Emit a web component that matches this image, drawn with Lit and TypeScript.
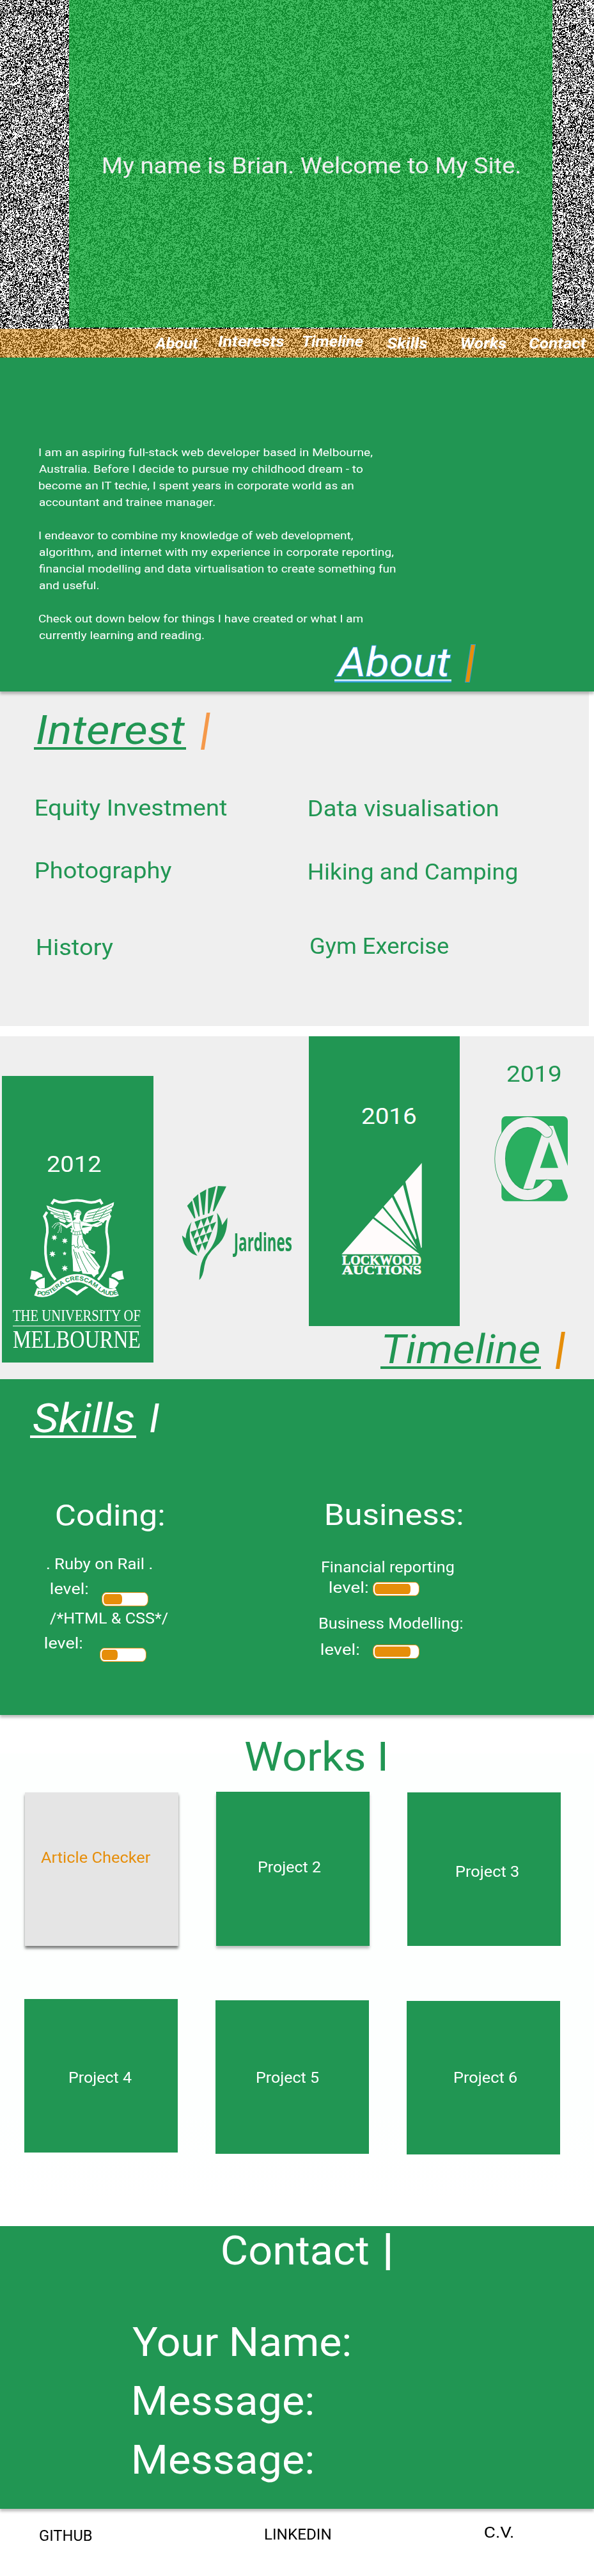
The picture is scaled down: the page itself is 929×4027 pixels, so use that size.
import { LitElement, html, css, svg } from "lit";
import { customElement, property } from "lit/decorators.js";

/** A single line of text stretched so that its ink starts at the left edge and spans `width` pixels. */
@customElement("fit-text")
class FitText extends LitElement {
  static styles = css`
    :host { display: block; white-space: pre; line-height: 1; flex: none; }
    .box { display: block; }
    .line { display: inline-block; transform-origin: 0 50%; }
  `;
  @property() text = "";
  @property({ type: Number }) width = 0;

  render() {
    return html`<span class="box" style="width:${this.width}px"><span class="line">${this.text}</span></span>`;
  }

  firstUpdated() {
    const line = this.renderRoot.querySelector(".line") as HTMLElement;
    const ctx = document.createElement("canvas").getContext("2d")!;
    ctx.font = getComputedStyle(line).font;
    const m = ctx.measureText(this.text);
    const ink = m.actualBoundingBoxLeft + m.actualBoundingBoxRight;
    const scale = this.text.length > 1 ? this.width / ink : 1;
    line.style.transform = `scaleX(${scale.toFixed(4)}) translateX(${m.actualBoundingBoxLeft.toFixed(2)}px)`;
  }
}

/** Black and white television static. */
@customElement("static-noise")
class StaticNoise extends LitElement {
  static styles = css`
    :host { display: block; }
    canvas { display: block; }
  `;

  render() {
    return html`<canvas width="929" height="559"></canvas>`;
  }

  firstUpdated() {
    const canvas = this.renderRoot.querySelector("canvas") as HTMLCanvasElement;
    const ctx = canvas.getContext("2d")!;
    const w = canvas.width;
    const h = canvas.height;
    let seed = 90210;
    const rand = () => {
      seed = (seed * 1664525 + 1013904223) >>> 0;
      return seed / 4294967296 - 0.5;
    };
    const field = new Float32Array((w + 1) * (h + 1));
    for (let i = 0; i < field.length; i++) field[i] = rand();
    const img = ctx.createImageData(w, h);
    for (let y = 0; y < h; y++) {
      for (let x = 0; x < w; x++) {
        const i = y * (w + 1) + x;
        const v = field[i] + 0.5 * field[i + 1] + 0.5 * field[i + w + 1];
        const c = v > -0.03 ? 255 : 0;
        const p = (y * w + x) * 4;
        img.data[p] = img.data[p + 1] = img.data[p + 2] = c;
        img.data[p + 3] = 255;
      }
    }
    ctx.putImageData(img, 0, 0);
  }
}

/** A small gauge showing how far a skill has come. */
@customElement("level-bar")
class LevelBar extends LitElement {
  static styles = css`
    :host { display: block; }
    .track {
      box-sizing: border-box; width: 73px; height: 22px; padding: 2px;
      border: 1px solid #e68e0a; border-radius: 7px / 9px; background: #fff;
    }
    .fill { height: 16px; border-radius: 4px / 6px; background: #e68e0a; }
  `;
  @property({ type: Number }) value = 0;

  render() {
    return html`<div class="track"><div class="fill" style="width:${this.value}px"></div></div>`;
  }
}

const t = (text: string, width: number, cls = "") =>
  html`<fit-text class=${cls} text=${text} width=${width}></fit-text>`;

const star = (cx: number, cy: number, r: number, n: number) => {
  const pts: string[] = [];
  for (let i = 0; i < n * 2; i++) {
    const a = (Math.PI * i) / n - Math.PI / 2;
    const q = i % 2 ? r * 0.48 : r;
    pts.push(`${(cx + q * Math.cos(a)).toFixed(1)},${(cy + q * Math.sin(a)).toFixed(1)}`);
  }
  return svg`<polygon points=${pts.join(" ")} />`;
};

const ribbonEnd = svg`
  <path d="M42,438 Q72,440 92,456 L95,466 Q82,467 60,483 L35,477 Q42,458 42,438Z" />
  <path d="M60,496 Q75,478 105,471 L105,520 L82,523 Q70,514 60,496Z" />`;

const crest = html`<svg class="crest" viewBox="30 98 450 465" width="150" height="155">
  <g fill="none" stroke="#fff" stroke-width="12">
    <path d="M137,126 L149,108 Q178,123 207,116 Q256,101 305,116 Q334,123 364,108 L375,126" />
    <path d="M116,163 L103,183 Q119,215 117,258 Q102,330 112,386 Q120,442 156,481" />
    <path d="M397,163 L410,183 Q393,215 395,258 Q410,330 400,386 Q392,442 355,481" />
  </g>
  <g fill="#fff">
    <path d="M200,517 L213,511 L256,536 L296,511 L310,517 Q280,532 256,555 Q232,532 200,517Z" />
    ${star(150, 283, 15, 7)}${star(199, 298, 15, 7)}${star(141, 360, 16, 7)}${star(198, 358, 10, 5)}${star(199, 427, 16, 7)}
    <path d="M113,132 Q165,154 205,155 Q226,158 231,180 L236,208 L220,212 L206,205 L200,214 L176,206 L170,194 L150,189 L146,176 L131,170 L133,160 L119,150Z" />
    <path d="M430,117 Q375,145 325,152 Q298,158 291,180 L283,207 L300,212 L340,208 L355,203 L368,210 L380,215 L388,203 L402,200 L399,192 L412,181 L410,170 L420,158 L418,147 L428,132Z" />
    <path d="M242,180 Q238,156 258,153 Q277,153 277,170 L270,181 L269,195 L277,208 L283,225 L276,250 L281,268 Q282,300 308,320 L312,334 L343,349 L338,361 L315,352 Q342,385 365,420 L356,436 L358,452 L346,458 L336,470 L325,456 L282,452 L278,438 L264,444 L238,441 L236,385 L232,360 L231,320 L233,268 L241,250 L231,232 L236,205 L250,196 L249,189 L240,189Z" />
    <path d="M277,238 L324,230 L327,236 L320,250 L312,252 L309,262 L300,262 L297,270 L284,262Z" />
    <path d="M325,222 L350,223 L375,214 L372,224 L362,228 L352,234 L338,232Z" />
    <path d="M238,205 L208,226 L180,213 L172,212 L176,219 L208,240 L238,222Z" />
    <path d="M278,206 L325,222 L366,208 L370,213 L330,232 L276,226Z" />
    <path d="M238,238 L222,238 L230,246 L226,256 L236,262Z" />
    ${ribbonEnd}
    <g transform="translate(512 0) scale(-1 1)">${ribbonEnd}</g>
  </g>
  <g fill="none" stroke="#fff" stroke-width="3.5" stroke-dasharray="5 2.5">
    <path d="M174,213 Q150,214 139,236" /><path d="M170,219 Q156,224 149,242" />
    <path d="M176,218 Q186,236 180,262" /><path d="M173,228 Q180,244 166,260" />
  </g>
  <g fill="none" stroke="#219653" stroke-width="3">
    <path d="M124,143 Q165,167 214,170 M128,157 Q165,178 220,184 M145,172 Q185,186 226,197 M165,188 Q190,196 212,203 M190,160 L205,205" />
    <path d="M420,130 Q370,162 306,170 M422,144 Q380,170 302,184 M418,160 Q370,184 296,197 M406,176 Q375,194 330,202 M372,140 Q344,160 330,196 M395,150 L360,200" />
    <path d="M244,163 L276,168 M246,181 Q255,178 252,168 M262,156 L276,160 M240,209 Q240,232 246,244 M270,206 Q268,224 274,244" stroke-width="2.2" />
    <path d="M235,253 Q258,260 279,250 M234,268 Q256,276 280,266 M247,256 L246,272 M258,257 L258,272 M268,256 L270,270" stroke-width="2.2" />
    <path d="M231,322 L242,318 L248,330 L258,324 L262,334 L272,322 L280,330 L288,322 M262,275 Q255,300 262,324 M280,290 Q282,315 298,336 L332,350" />
    <path d="M240,338 Q250,380 274,436 M262,352 Q280,400 306,446 M284,346 Q308,400 342,434 M300,352 Q330,392 352,418 M250,350 L262,382" />
    <path d="M244,214 L270,216" stroke-width="1.8" />
  </g>
  <path d="M62,537 Q112,556 156,516 Q208,473 256,473 Q304,473 356,516 Q400,556 445,537" fill="none" stroke="#fff" stroke-width="38" />
  <path id="mottoline" d="M68,551 Q120,565 162,524 Q212,483 256,483 Q300,483 350,524 Q392,565 444,549" fill="none" />
  <text fill="#219653" font-family="'Liberation Sans', sans-serif" font-weight="700" font-size="28" textLength="420" lengthAdjust="spacingAndGlyphs"><textPath href="#mottoline">POSTERA CRESCAM LAUDE</textPath></text>
</svg>`;

const uniName = html`<svg class="uni" viewBox="0 0 200 66" width="200" height="66">
  <g fill="#fff" font-family="'Liberation Serif', serif">
    <text x="0" y="18.5" font-size="25.5" textLength="200" lengthAdjust="spacingAndGlyphs">THE UNIVERSITY OF</text>
    <text x="0" y="61" font-size="40" textLength="200" lengthAdjust="spacingAndGlyphs">MELBOURNE</text>
  </g>
  <rect y="26" width="200" height="1.8" fill="#a6d5ba" />
</svg>`;

const jardines = html`<svg class="jardines" viewBox="27 96 522 450" width="174" height="150" fill="#219653">
  <path d="M53,195 L76,170 L92,252 L87,255Z M80,163 L105,140 L112,243 L107,247Z M113,135 L143,118 L134,237 L127,238Z M152,114 L188,103 L157,230 L150,231Z M197,102 L237,104 L180,220 L173,221Z" />
  <path d="M74,270 C58,320 62,375 101,429 C60,420 35,380 29,334 L46,348 Q48,305 74,270Z" />
  <path d="M193,228 Q212,250 217,286 L242,250 C242,320 222,358 188,386 Q142,424 134,478 Q128,528 110,543 C112,480 122,440 150,412 C195,360 203,300 193,228Z" />
  <path d="M88,270 L118,259 L101,305Z M118,259 L148,248 L131,292Z M148,248 L177,237 L160,280Z
    M69,317 L100,306 L82,350Z M100,306 L130,294 L111,338Z M130,294 L160,282 L141,326Z M160,282 L189,270 L170,314Z
    M82,350 L111,338 L95,382Z M111,338 L141,327 L124,370Z M141,327 L170,316 L153,360Z
    M93,382 L123,371 L107,416Z M123,371 L153,360 L137,404Z" />
  <text x="272" y="409" font-family="'Open Sans', sans-serif" font-weight="700" font-size="118" textLength="274" lengthAdjust="spacingAndGlyphs">Jardines</text>
</svg>`;

const lockwood = html`<svg class="lockwood" viewBox="0 0 128 178" width="128" height="178" fill="#fffbfb">
  <path d="M126.7,1 L101,30.2 L125.5,134 L126.7,133Z M97.3,35.3 L82.7,51.3 L117,120.8 L118.6,118.5Z M80,54.5 L67,69 L118.5,132.3Z M65.3,71.3 L52.3,85.8 L119.5,137.6Z M50.3,88 L1.3,143.8 L123.3,143.8Z" />
  <g font-family="'Liberation Serif', serif" font-weight="700" stroke="#fffbfb" stroke-width=".7">
    <text x="2" y="160" font-size="20" textLength="124" lengthAdjust="spacingAndGlyphs">LOCKWOOD</text>
    <text x="2" y="175" font-size="19" textLength="124" lengthAdjust="spacingAndGlyphs">AUCTIONS</text>
  </g>
</svg>`;

const caLogo = html`<svg class="ca" viewBox="0 0 114 133" width="114" height="133">
  <rect x="9.3" y="0" width="103.7" height="132.7" rx="7" fill="#2aaf60" />
  <path d="M84.3,15 L90.3,15 L114,80.5 L114,127 L104,99 L63.3,99 L58.7,113.5 L43.3,113.5 L73.3,25.8Z M83.7,40 L69.7,80.7 L98,80.7Z" fill="#efefef" fill-rule="evenodd" />
  <path d="M80.6,24.9 A43.5,57 0 1 0 80.6,107.5" fill="none" stroke="#219653" stroke-width="17.4" stroke-linecap="round" />
  <path d="M80.6,24.9 A43.5,57 0 1 0 80.6,107.5" fill="none" stroke="#efefef" stroke-width="15.8" stroke-linecap="round" />
</svg>`;

@customElement("app-root")
class AppRoot extends LitElement {
  static styles = css`
    :host { display: block; width: 929px; height: 4027px; overflow: hidden; background: #fff;
      font-family: Roboto, "Liberation Sans", sans-serif; color: #fff; }
    section, header, footer { box-sizing: border-box; }
    .row { display: flex; align-items: flex-start; }
    svg { display: block; overflow: visible; }

    .top { display: grid; height: 559px; }
    .top > * { grid-area: 1 / 1; }
    .hero { height: 512px; margin: 0 65px 2px 108px; padding: 242px 0 0 53px; box-sizing: border-box;
      background: rgba(19, 172, 59, .8); font-size: 35px; color: #efefef; }
    nav { display: grid; grid-template-columns: 100px 132px 132px 116px 106px 1fr; box-sizing: border-box;
      height: 45px; padding: 12px 0 0 241px; background: rgba(230, 142, 10, .52);
      font: italic 700 23px Roboto, sans-serif; }
    .raised { margin-top: -3px; }

    .green { background: #219653; box-shadow: 0 4px 4px rgba(0, 0, 0, .25); position: relative; }
    .title { font-size: 63px; font-style: italic; height: 63px; }
    .title .word { border-bottom: 4px solid currentColor; height: 58px; padding-left: 5px; margin-left: -5px; }
    .bar { font-size: 68px; font-weight: 900; color: #e68e0a; margin-top: -4px; }

    .about { height: 522px; padding: 135px 0 0 60.5px; }
    .copy { display: flex; flex-direction: column; font-size: 17.3px; }
    .copy fit-text { line-height: 26px; }
    .gap { margin-top: 26px; }
    .about .title { margin: -2px 0 0 465.5px; -webkit-text-stroke: 2px #2d9cdb; paint-order: stroke fill; }
    .about .word { width: 180px; padding-left: 3px; margin-left: -3px; border-bottom: 3px solid #c4e6fa; box-shadow: 0 2px 0 #2d9cdb; }
    .about .bar { margin-left: 22px; }

    .interest { width: 921px; height: 523px; padding: 29px 0 0 58px; background: #efefef; color: #219653; margin-bottom: 16px; }
    .interest .word { width: 233px; }
    .interest .bar { margin-left: 23px; font-weight: 700; color: #f5994a; }
    .likes { display: grid; grid-template-columns: 427px auto; margin-left: -2px; font-size: 34.6px; padding-top: 73px; }
    .likes fit-text { height: 97px; }
    .likes .low { margin-top: 2px; height: 95px; }
    .likes .h { margin: 23px 0 0 2px; }
    .likes .g { margin: 21px 0 0 3px; }
    .likes .one { margin-top: 1px; }

    .timeline { height: 536px; background: #efefef; display: flex; align-items: flex-start; color: #219653; }
    .year { font-size: 35px; }
    .card1 { width: 237px; height: 448px; margin: 62px 0 0 3px; background: #219653; color: #fff; }
    .card1 .year { margin: 121px 0 0 71px; }
    .crest { margin: 35px 0 0 42px; }
    .uni { margin: 18px 0 0 17px; }
    .jardines { margin: 232px 0 0 44px; }
    .late { width: 446px; margin-left: 25px; }
    .card2 { width: 236px; height: 453px; background: #219653; color: #fff; }
    .card2 .year { margin: 108px 0 0 83px; }
    .lockwood { margin: 54px 0 0 50px; }
    .col4 .year { margin: 42px 0 0 74px; }
    .ca { margin: 48px 0 0 56px; }
    .late .title { margin: 5px 0 0 118px; }
    .late .word { width: 245px; padding-left: 6px; margin-left: -6px; }
    .late .bar { margin-left: 23px; }

    .skills { height: 525px; padding: 30px 0 0 52px; }
    .skills .word { width: 161px; }
    .skills .title > .i { margin-left: 22px; }
    .groups { display: grid; grid-template-columns: 447px 1fr; padding-top: 96px; font-size: 23.5px; }
    .h2 { font-size: 47px; }
    .coding .h2 { margin-left: 36px; }
    .ruby { margin: 42px 0 0 21px; }
    .l1 { margin: 15px 0 0 27px; }
    .l1 level-bar { margin: 16px 0 0 21px; }
    .htmlcss { margin: 24px 0 0 26px; }
    .l2 { margin: 15px 0 0 18px; }
    .l2 level-bar { margin: 18px 0 0 27px; }
    .l1, .l2 { height: 22.5px; }
    .business .h2 { margin: -1px 0 0 11px; }
    .fin { margin: 48px 0 0 4px; }
    .l3 { margin: 8px 0 0 16px; height: 25px; }
    .l3 level-bar { margin: 2px 0 0 7px; }
    .mod { margin: 31px 0 0 0; }
    .l4 { margin: 18px 0 0 3px; }
    .l4 level-bar { margin: 3px 0 0 21px; }

    .works { height: 799px; padding-top: 35px; color: #219653; background: linear-gradient(#fff 60px, #fdfffe 61px, #fdfffe 620px, #fff 760px); }
    .works .h1 { font-size: 62.5px; margin-left: 383px; height: 86px; }
    .grid { display: grid; grid-template-columns: 240px 240px 240px; column-gap: 59px; margin-left: 39px; font-size: 23.3px; color: #fff; }
    .second { margin: 83px 0 0 38px; }
    .p { box-sizing: border-box; height: 240px; background: #219653; }
    .p1 { background: #e5e5e5; color: #e68e0a; box-shadow: 0 4px 4px rgba(0, 0, 0, .5); padding: 91px 0 0 25px; }
    .p2 { margin-top: -1px; height: 241px; box-shadow: 0 4px 4px rgba(0, 0, 0, .25); padding: 107px 0 0 66px; }
    .p3 { padding: 113px 0 0 76px; }
    .p4 { padding: 112px 0 0 70px; }
    .p5 { margin-top: 2px; padding: 110px 0 0 64px; }
    .p6 { margin-top: 3px; padding: 109px 0 0 74px; }

    .contact { height: 442px; padding: 7px 0 0 207px; font-size: 63px; }
    .contact .row { margin-left: 141px; margin-bottom: 80px; height: 63px; }
    .contact .pipe { margin: -4px 0 0 27px; font-size: 68px; font-weight: 900; }
    .contact > fit-text { height: 92px; }
    .msg { margin-left: 3px; }

    footer { display: grid; grid-template-columns: 352px 344px 1fr; padding: 27px 0 0 62px; font-size: 23.4px; color: #000; }
    .f1 { margin-top: 4px; }
    .f2 { margin-top: 2px; }
    .f3 { margin-top: -1px; }
  `;

  render() {
    return html`
      <header class="top">
        <static-noise></static-noise>
        <div>
          <div class="hero">${t("My name is Brian. Welcome to My Site.", 652)}</div>
          <nav>
            ${t("About", 69)}${t("Interests", 103, "raised")}${t("Timeline", 95, "raised")}
            ${t("Skills", 63)}${t("Works", 71)}${t("Contact", 90)}
          </nav>
        </div>
      </header>

      <section class="green about">
        <div class="copy">
          ${t("I am an aspiring full-stack web developer based in Melbourne,", 521.5)}
          ${t("Australia. Before I decide to pursue my childhood dream - to", 507)}
          ${t("become an IT techie, I spent years in corporate world as an", 492.5)}
          ${t("accountant and trainee manager.", 275.5)}
          ${t("I endeavor to combine my knowledge of web development,", 491, "gap")}
          ${t("algorithm, and internet with my experience in corporate reporting,", 554.5)}
          ${t("financial modelling and data virtualisation to create something fun", 558)}
          ${t("and useful.", 94)}
          ${t("Check out down below for things I have created or what I am", 506, "gap")}
          ${t("currently learning and reading.", 258.5)}
        </div>
        <div class="row title"><div class="word">${t("About", 179)}</div>${t("|", 14, "bar")}</div>
      </section>

      <section class="interest">
        <div class="row title"><div class="word">${t("Interest", 232)}</div>${t("|", 14, "bar")}</div>
        <div class="likes">
          ${t("Equity Investment", 299)}${t("Data visualisation", 295.5, "one")}
          ${t("Photography", 212)}${t("Hiking and Camping", 326, "low")}
          ${t("History", 118.5, "h")}${t("Gym Exercise", 216, "g")}
        </div>
      </section>

      <section class="timeline">
        <div class="card1">
          <div class="row">${t("2012", 84, "year")}</div>
          ${crest}${uniName}
        </div>
        ${jardines}
        <div class="late">
          <div class="row">
            <div class="card2"><div class="row">${t("2016", 84, "year")}</div>${lockwood}</div>
            <div class="col4"><div class="row">${t("2019", 84, "year")}</div>${caLogo}</div>
          </div>
          <div class="row title"><div class="word">${t("Timeline", 243)}</div>${t("|", 14, "bar")}</div>
        </div>
      </section>

      <section class="green skills">
        <div class="row title"><div class="word">${t("Skills", 158)}</div>${t("I", 14, "i")}</div>
        <div class="groups">
          <div class="coding">
            ${t("Coding:", 168, "h2")}
            ${t(". Ruby on Rail .", 165, "ruby")}
            <div class="row l1">${t("level:", 59)}<level-bar value="29"></level-bar></div>
            ${t("/*HTML & CSS*/", 184.5, "htmlcss")}
            <div class="row l2">${t("level:", 59)}<level-bar value="25"></level-bar></div>
          </div>
          <div class="business">
            ${t("Business:", 213, "h2")}
            ${t("Financial reporting", 206.5, "fin")}
            <div class="row l3">${t("level:", 61)}<level-bar value="56"></level-bar></div>
            ${t("Business Modelling:", 225, "mod")}
            <div class="row l4">${t("level:", 60)}<level-bar value="56"></level-bar></div>
          </div>
        </div>
      </section>

      <section class="works">
        ${t("Works I", 219.5, "h1")}
        <div class="grid">
          <div class="p p1">${t("Article Checker", 171.5)}</div>
          <div class="p p2">${t("Project 2", 98)}</div>
          <div class="p p3">${t("Project 3", 98)}</div>
        </div>
        <div class="grid second">
          <div class="p p4">${t("Project 4", 98)}</div>
          <div class="p p5">${t("Project 5", 98)}</div>
          <div class="p p6">${t("Project 6", 98)}</div>
        </div>
      </section>

      <section class="green contact">
        <div class="row">${t("Contact", 228)}${t("|", 14, "pipe")}</div>
        ${t("Your Name:", 340)}
        ${t("Message:", 279, "msg")}
        ${t("Message:", 279, "msg")}
      </section>

      <footer>
        ${t("GITHUB", 82, "f1")}${t("LINKEDIN", 103, "f2")}${t("C.V.", 45, "f3")}
      </footer>
    `;
  }
}
